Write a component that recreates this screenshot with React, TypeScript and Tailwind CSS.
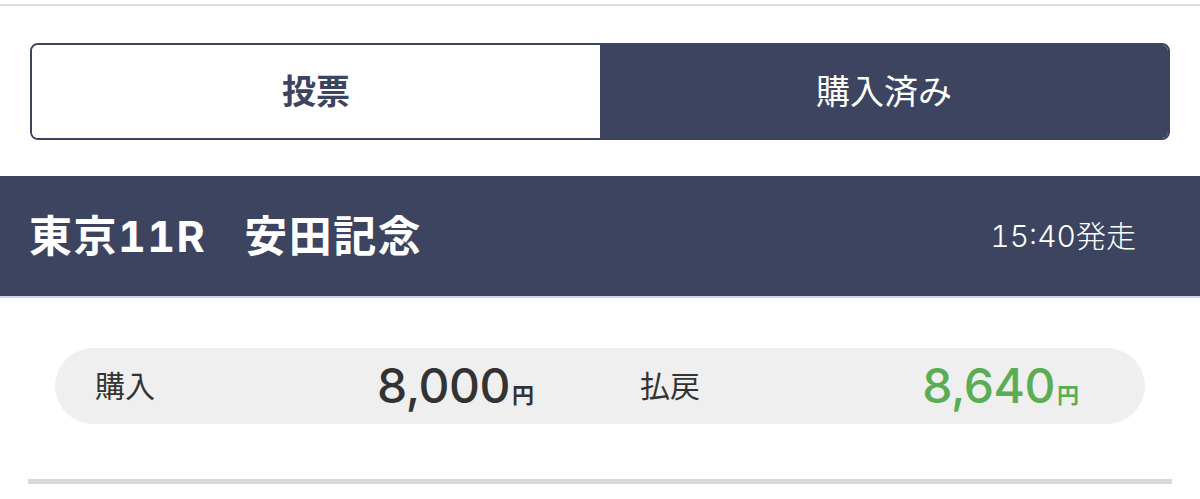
const font = "font-['Inter','Noto_Sans_CJK_JP',sans-serif]";

const Amount = ({ label, value, green }: { label: string; value: string; green?: boolean }) => (
  <div className="flex items-center justify-between pl-10 pr-[66px]">
    <span className="text-[30px] text-[#333333] font-normal leading-none">{label}</span>
    <span className={`flex items-baseline leading-none ${green ? "text-[#5aad55]" : "text-[#333333]"}`}>
      <span className="text-[48px] font-medium tracking-[-0.5px]">{value}</span>
      <span className="text-[22px] font-bold ml-[2px]">円</span>
    </span>
  </div>
);

export default function App() {
  return (
    <div className={`w-[1200px] h-[499px] bg-white overflow-hidden pt-1 ${font}`}>
      <div className="h-[2px] bg-[#dcdcdc]" />

      {/* tabs */}
      <div className="mt-[37px] mx-[30px] h-[97px] border-2 border-[#3c4460] rounded-lg overflow-hidden grid grid-cols-2">
        <div className="flex items-center justify-center bg-white text-[#3c4460] text-[34px] font-bold">
          投票
        </div>
        <div className="flex items-center justify-center bg-[#3c4460] text-white text-[34px] font-normal">
          購入済み
        </div>
      </div>

      {/* race header */}
      <div className="mt-[36px] h-[122px] bg-[#3c4460] border-b-2 border-[#d4d4e4] flex items-center justify-between pl-[29px] pr-[64px]">
        <h1 className="text-white text-[43px] font-bold tracking-[1.5px] tabular-nums">
          東京11R<span className="inline-block w-[38px]" />安田記念
        </h1>
        <span className="text-white text-[30px] font-light tabular-nums">15:40発走</span>
      </div>

      {/* purchase / payout */}
      <div className="mt-[50px] mx-[55px] h-[76px] rounded-full bg-[#efefef] grid grid-cols-2">
        <Amount label="購入" value="8,000" />
        <Amount label="払戻" value="8,640" green />
      </div>

      <div className="mt-[55px] mx-[28px] h-[5px] bg-[#d8d8d8]" />
    </div>
  );
}
